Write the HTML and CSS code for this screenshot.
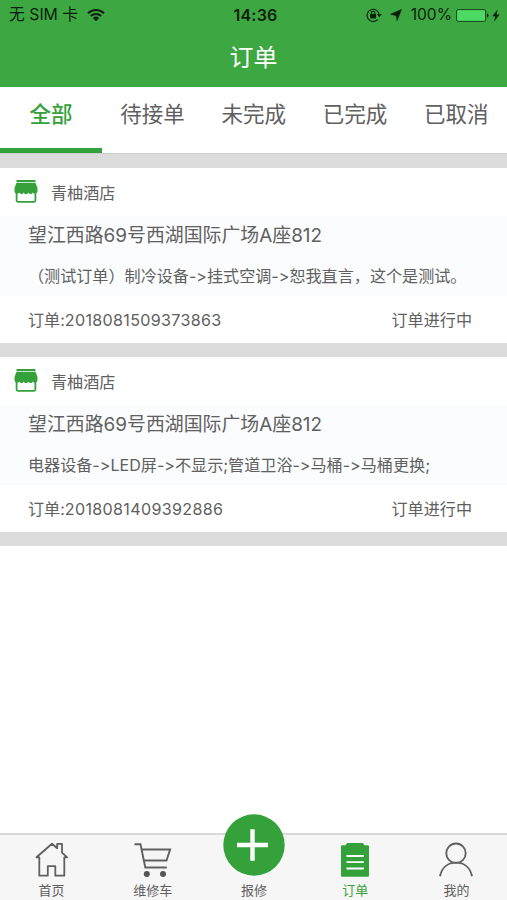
FILE: index.html
```html
<!DOCTYPE html>
<html lang="zh-CN">
<head>
  <meta charset="UTF-8">
  <title>订单</title>
  <link rel="stylesheet" href="styles.css">
</head>
<body>
  <header class="header">
    <div class="status">
      <div class="status-left">
        <span class="carrier">无 SIM 卡</span>
        <svg class="wifi" width="18" height="14" viewBox="0 0 18 14">
          <path d="M1 5.2a11.5 11.5 0 0 1 16 0M3.9 8a7.4 7.4 0 0 1 10.2 0" fill="none" stroke="#0b1f0c" stroke-width="2.1"/>
          <path d="M5.9 10a4.5 4.5 0 0 1 6.2 0L9 13.2z" fill="#0b1f0c"/>
        </svg>
      </div>
      <span class="time">14:36</span>
      <div class="status-right">
        <svg class="lock" width="16" height="14" viewBox="0 0 16 14">
          <path d="M11.6 11.6A6.1 6.1 0 1 1 13.2 6.5" fill="none" stroke="#0b1f0c" stroke-width="1.1"/>
          <path d="M10.8 6.3h5l-2.5 3z" fill="#0b1f0c"/>
          <rect x="4.2" y="6" width="5.8" height="4.4" fill="#0b1f0c"/>
          <path d="M5.4 6.5V5a1.7 1.7 0 0 1 3.4 0v1.5" fill="none" stroke="#0b1f0c" stroke-width="1.1"/>
        </svg>
        <svg class="arrow" width="12" height="12" viewBox="0 0 12 12">
          <path d="M11.7 .3L7 11.8 6.2 6.8.2 5.2z" fill="#0b1f0c" stroke="#0b1f0c" stroke-width=".4"/>
        </svg>
        <span class="percent">100%</span>
        <svg class="battery" width="34" height="13" viewBox="0 0 34 13">
          <rect x=".6" y=".6" width="29" height="11.8" rx="1.5" fill="#4cd964" stroke="#14451a"/>
          <path d="M31 4.5c2 .4 2 3.6 0 4z" fill="#0b1f0c"/>
        </svg>
        <svg class="bolt" width="8" height="13" viewBox="0 0 8 13">
          <path d="M5.7.5L.3 7.3h3L2 12.5 7.7 5.4H4.5z" fill="#0b1f0c"/>
        </svg>
      </div>
    </div>
    <h1>订单</h1>
  </header>

  <nav class="tabs">
    <a class="tab active">全部</a>
    <a class="tab">待接单</a>
    <a class="tab">未完成</a>
    <a class="tab">已完成</a>
    <a class="tab">已取消</a>
  </nav>

  <main class="list">
    <section class="order">
      <div class="shop">
        <svg width="24" height="23" viewBox="0 0 24 23">
          <path d="M2.5 0h19v2h-19zM2.5 2.8h19l2 5.2v3.3a2.6 2.6 0 0 1-4.8 1.1 2.3 2.3 0 0 1-4.4 0 2.3 2.3 0 0 1-4.5 0 2.3 2.3 0 0 1-4.4 0 2.6 2.6 0 0 1-4.9-1.1V8z" fill="#35a13a"/>
          <path d="M2.6 12v8.6q0 1.2 1.2 1.2h16.4q1.2 0 1.2-1.2V12" fill="none" stroke="#35a13a" stroke-width="1.8"/>
        </svg>
        <span>青柚酒店</span>
      </div>
      <div class="detail">
        <p class="address">望江西路69号西湖国际广场A座812</p>
        <p class="desc">（测试订单）制冷设备-&gt;挂式空调-&gt;恕我直言，这个是测试。</p>
      </div>
      <div class="foot">
        <span>订单:<span class="number">2018081509373863</span></span>
        <span>订单进行中</span>
      </div>
    </section>

    <section class="order">
      <div class="shop">
        <svg width="24" height="23" viewBox="0 0 24 23">
          <path d="M2.5 0h19v2h-19zM2.5 2.8h19l2 5.2v3.3a2.6 2.6 0 0 1-4.8 1.1 2.3 2.3 0 0 1-4.4 0 2.3 2.3 0 0 1-4.5 0 2.3 2.3 0 0 1-4.4 0 2.6 2.6 0 0 1-4.9-1.1V8z" fill="#35a13a"/>
          <path d="M2.6 12v8.6q0 1.2 1.2 1.2h16.4q1.2 0 1.2-1.2V12" fill="none" stroke="#35a13a" stroke-width="1.8"/>
        </svg>
        <span>青柚酒店</span>
      </div>
      <div class="detail">
        <p class="address">望江西路69号西湖国际广场A座812</p>
        <p class="desc">电器设备-&gt;LED屏-&gt;不显示;管道卫浴-&gt;马桶-&gt;马桶更换;</p>
      </div>
      <div class="foot">
        <span>订单:<span class="number">2018081409392886</span></span>
        <span>订单进行中</span>
      </div>
    </section>
  </main>

  <nav class="bottom">
    <a class="item">
      <svg width="34" height="36" viewBox="0 0 34 36" fill="none" stroke="#606060" stroke-width="1.8" stroke-linejoin="round">
        <path d="M4.3 15.3v18.4h8.5V24.2h7.5v9.5h9V15.3h2.8L27 10.7V1.8h-4.8v4.4L17 1.8 1.5 15.3z"/>
      </svg>
      <span>首页</span>
    </a>
    <a class="item">
      <svg width="38" height="36" viewBox="0 0 38 36">
        <path d="M.5 2.2h6l4.8 23.3h21.5M7.7 7.5h28.4l-3.6 11H10" fill="none" stroke="#606060" stroke-width="1.9"/>
        <circle cx="12.8" cy="32" r="3" fill="#555"/>
        <circle cx="29" cy="32" r="3" fill="#555"/>
      </svg>
      <span>维修车</span>
    </a>
    <a class="item">
      <svg class="plus" width="62" height="62" viewBox="0 0 62 62">
        <circle cx="31" cy="31" r="30.7" fill="#35a13a"/>
        <path d="M14 31h31M29.5 15.2v31.6" stroke="#fff" stroke-width="4.4"/>
      </svg>
      <span>报修</span>
    </a>
    <a class="item active">
      <svg width="30" height="36" viewBox="0 0 30 36">
        <path d="M2 3.3h3.5L7 1h16l1.5 2.3H28q1 0 1 1v29.4q0 1-1 1H2q-1 0-1-1V4.3q0-1 1-1z" fill="#35a13a"/>
        <path d="M6.5 14h17.3M6.5 20.2h17.3M6.5 26.5h17.3" stroke="#fff" stroke-width="1.8"/>
      </svg>
      <span>订单</span>
    </a>
    <a class="item">
      <svg width="34" height="36" viewBox="0 0 34 36" fill="none" stroke="#606060" stroke-width="1.8">
        <circle cx="17" cy="11.2" r="9.7"/>
        <path d="M1 34.2C3 25 9.5 20.7 17 20.7S31 25 33 34.2"/>
      </svg>
      <span>我的</span>
    </a>
  </nav>
</body>
</html>
```

FILE: styles.css
```css
* {
  box-sizing: border-box;
}
body {
  margin: 0;
  height: 900px;
  display: flex;
  flex-direction: column;
  background-color: #fff;
  color: #606060;
  font-family: Inter, "Noto Sans CJK SC", sans-serif;
  font-feature-settings: "calt" 0;
  overflow: hidden;
}
svg {
  display: block;
  flex: none;
}
.header {
  height: 87px;
  background-color: #3da742;
}
.status {
  display: grid;
  grid-template-columns: 1fr auto 1fr;
  align-items: center;
  height: 30px;
  padding: 0 7px 0 9px;
  color: #0b1f0c;
  font-size: 16px;
  line-height: 30px;
}
.status-left {
  display: flex;
  align-items: center;
  gap: 9px;
}
.status-right {
  display: flex;
  align-items: center;
  justify-content: flex-end;
}
.carrier {
  font-size: 15.8px;
}
.time {
  padding-left: 2px;
  font-weight: 600;
  letter-spacing: 0.2px;
}
.arrow {
  margin: 0 9px 0 8px;
}
.percent {
  margin-right: 4px;
  font-size: 15.6px;
}
.bolt {
  margin-left: 2px;
}
.header h1 {
  margin: 0;
  color: #fff;
  font-size: 24px;
  font-weight: 400;
  line-height: 55px;
  text-align: center;
}
.tabs {
  display: flex;
  height: 66px;
}
.tab {
  flex: 1;
  font-size: 21.5px;
  line-height: 54px;
  text-align: center;
}
.tab.active {
  flex: 0 0 102px;
  color: #35a13a;
  font-weight: 500;
  border-bottom: 5px solid #35a13a;
}
.list::before {
  content: "";
  display: block;
  height: 14px;
  background-color: #dcdcdc;
  border-top: 1px solid #cdcdcd;
}
.order {
  border-bottom: 14px solid #dcdcdc;
  font-size: 16.1px;
}
.shop {
  display: flex;
  align-items: center;
  gap: 13px;
  height: 48px;
  padding: 0 0 1px 14px;
}
.detail {
  height: 80px;
  padding: 0 28px;
  background-color: #fafcfd;
}
.detail p {
  margin: 0;
  height: 40px;
  line-height: 40px;
  white-space: nowrap;
}
.detail .address {
  font-size: 18.9px;
}
.foot {
  display: flex;
  justify-content: space-between;
  height: 47px;
  padding: 0 35px 0 28px;
  line-height: 48px;
}
.number {
  letter-spacing: 0.32px;
}
.bottom {
  display: flex;
  height: 67px;
  margin-top: auto;
  padding-left: 1px;
  border-top: 2px solid #d9d9d9;
  background-color: #f6f6f6;
}
.item {
  flex: 1;
  display: flex;
  flex-direction: column;
  align-items: center;
  justify-content: flex-end;
  padding-bottom: 1px;
  font-size: 13px;
  line-height: 18px;
}
.item span {
  margin-top: 3px;
}
.item.active {
  color: #35a13a;
}
.plus {
  margin-bottom: 2px;
}
```
